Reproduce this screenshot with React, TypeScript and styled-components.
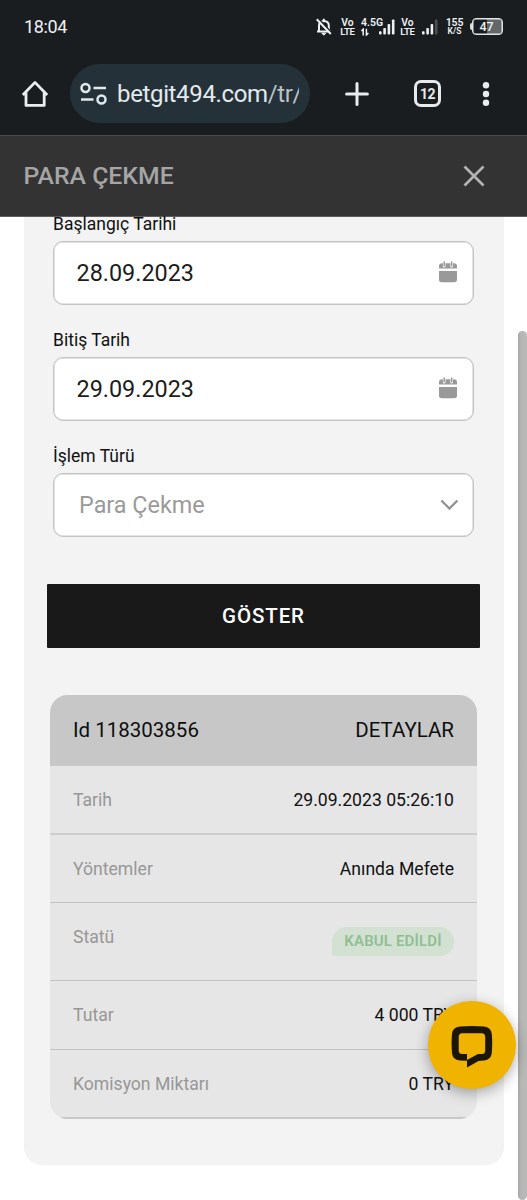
import React from "react";
import styled, { createGlobalStyle } from "styled-components";

const Global = createGlobalStyle`
  * { box-sizing: border-box; }
  html, body { margin: 0; padding: 0; background: #fff; }
  body { font-family: Roboto, "Liberation Sans", sans-serif; color: #111; overflow: hidden; }
`;

const Screen = styled.div`
  position: relative;
  width: 527px;
  height: 1200px;
  overflow: hidden;
  display: flex;
  flex-direction: column;
  background: #fff;
`;

const StatusBar = styled.div`
  height: 53px;
  flex: none;
  display: flex;
  align-items: center;
  padding: 0 24px;
  background: #191d20;
  color: #eef1f2;
`;

const Clock = styled.span`
  font-size: 18px;
  line-height: 20px;
  letter-spacing: -0.35px;
  margin-top: 1px;
  flex: 1;
`;

const StatusIcons = styled.div`
  display: flex;
  align-items: center;
  height: 20px;
`;

const Stack = styled.div<{ $w: number; $ml?: number }>`
  width: ${(p) => p.$w}px;
  margin-left: ${(p) => p.$ml ?? 0}px;
  margin-top: 1px;
  display: flex;
  flex-direction: column;
  align-items: center;
  font-weight: 600;
  white-space: nowrap;
`;

const Tiny = styled.span<{ $size?: number; $ls?: number }>`
  font-size: ${(p) => p.$size ?? 10}px;
  line-height: 9px;
  letter-spacing: ${(p) => p.$ls ?? 0}px;
`;

const Signal = styled.svg<{ $ml: number }>`
  display: block;
  flex: none;
  margin-left: ${(p) => p.$ml}px;
`;

const Battery = styled.div`
  width: 33px;
  height: 17px;
  margin-left: 7px;
  display: flex;
  align-items: center;
`;

const BatteryTip = styled.i`
  width: 2px;
  height: 7px;
  border-radius: 2px 0 0 2px;
  background: #d9dcdd;
`;

const BatteryBody = styled.div`
  width: 31px;
  height: 17px;
  border: 1px solid #e2e5e6;
  box-shadow: inset 0 0 0 0.5px #e2e5e6;
  border-radius: 4px;
  background: linear-gradient(90deg, #191d20 0 50%, #63676a 50%);
  background-clip: padding-box;
  font-size: 12.5px;
  line-height: 16px;
  font-weight: 500;
  text-align: center;
  padding-right: 2px;
`;

const Browser = styled.div`
  height: 82px;
  flex: none;
  display: flex;
  align-items: center;
  padding: 0 0 1px 21px;
  background: #191d20;
`;

const Icon = styled.svg<{ $ml?: number; $mt?: number }>`
  display: block;
  flex: none;
  margin-left: ${(p) => p.$ml ?? 0}px;
  margin-top: ${(p) => p.$mt ?? 0}px;
`;

const Address = styled.div`
  width: 240px;
  height: 59px;
  margin-left: 21px;
  border-radius: 30px;
  background: #243139;
  display: flex;
  align-items: center;
  padding: 0 11px 0 10px;
`;

const Url = styled.div`
  margin-left: 9px;
  flex: 1;
  overflow: hidden;
  white-space: nowrap;
  font-size: 24px;
  letter-spacing: -0.35px;
  line-height: 32px;
  padding-top: 1px;
  color: #e3eaee;
`;

const UrlPath = styled.span`
  color: #b9c2c7;
`;

const Tabs = styled.div`
  width: 27px;
  height: 27px;
  margin-left: 45px;
  border: 3px solid #e6eaec;
  border-radius: 7px;
  font-size: 14px;
  line-height: 22px;
  font-weight: 700;
  letter-spacing: -0.6px;
  text-align: center;
  color: #e6eaec;
`;

const Header = styled.header`
  height: 82px;
  flex: none;
  display: flex;
  align-items: center;
  justify-content: space-between;
  padding: 0 42px 0 23.5px;
  background: #333;
  border-top: 1px solid #4a4a4b;
  border-bottom: 1px solid #5c5c5c;
`;

const Title = styled.h1`
  margin: 0;
  font-size: 24.8px;
  line-height: 28px;
  font-weight: 500;
  color: #a5a5a5;
`;

const Panel = styled.main`
  width: 480px;
  height: 948px;
  margin-left: 23.5px;
  flex: none;
  background: #f3f3f3;
  border-radius: 0 0 18px 18px;
`;

const Form = styled.div`
  padding: 0 29.5px;
`;

const Label = styled.label<{ $top: number }>`
  display: block;
  margin-top: ${(p) => p.$top}px;
  font-size: 17.5px;
  line-height: 20px;
  color: #111;
`;

const Field = styled.div<{ $select?: boolean }>`
  height: 64px;
  margin-top: 7px;
  display: flex;
  align-items: center;
  justify-content: space-between;
  padding: ${(p) => (p.$select ? "1px 14px 0 25px" : "0 16px 0 22.5px")};
  border: 1px solid #c4c4c4;
  box-shadow: inset 0 0 0 0.5px #c8c8c8;
  border-radius: 10px;
  background: #fff;
  font-size: 23.4px;
  color: ${(p) => (p.$select ? "#9a9a9a" : "#1c1c1c")};
`;

const Submit = styled.button`
  display: block;
  width: 433px;
  height: 64.5px;
  margin: 47px 0 0 23.5px;
  padding: 0;
  border: 0;
  border-radius: 1px;
  background: #191919;
  color: #fff;
  font: 500 20.5px/24px Roboto, sans-serif;
  letter-spacing: 0.9px;
`;

const Table = styled.section`
  width: 427px;
  margin: 47px 0 0 26.5px;
  border-radius: 18px;
  overflow: hidden;
  background: #e6e6e6;
`;

const TableHead = styled.div`
  height: 71px;
  display: flex;
  align-items: center;
  justify-content: space-between;
  padding: 0 23px 1px;
  background: #c7c7c7;
  font-size: 20.5px;
  color: #0e0e0e;
`;

const Row = styled.div<{ $h: number; $line: string; $b?: number }>`
  height: ${(p) => p.$h}px;
  display: flex;
  justify-content: space-between;
  align-items: flex-start;
  padding: 24px 23px 0;
  border-bottom: ${(p) => p.$b ?? 1}px solid ${(p) => p.$line};
  font-size: 17.6px;
  line-height: 21px;
`;

const Name = styled.span`
  color: #979797;
`;

const Value = styled.span`
  color: #111;
`;

const Badge = styled.span`
  width: 122px;
  height: 29px;
  border-radius: 15px 15px 15px 2px;
  background: #d3e1d3;
  color: #8fbf91;
  font-size: 15px;
  line-height: 29px;
  font-weight: 600;
  letter-spacing: 0.15px;
  text-align: center;
`;

const Scrollbar = styled.div`
  position: absolute;
  top: 331px;
  right: 0;
  width: 9px;
  height: 869px;
  border-radius: 5px;
  background: linear-gradient(90deg, #a4a4a3, #b5b5b4 30%, #bababa);
`;

const Chat = styled.button`
  position: absolute;
  left: 428px;
  top: 1001px;
  width: 87.5px;
  height: 87.5px;
  padding: 4px 0 0;
  border: 0;
  border-radius: 50%;
  background: #f0b300;
  box-shadow: 0 4px 14px rgba(0, 0, 0, 0.32);
  display: flex;
  align-items: center;
  justify-content: center;
`;

const Bars = ({ dim, ml }: { dim?: boolean; ml: number }) => (
  <Signal $ml={ml} width="16" height="16" viewBox="0 0 16 16" fill="#eef1f2">
    <rect x="0" y="12.2" width="2.6" height="3.3" rx=".8" />
    <rect x="4.3" y="9" width="2.6" height="6.5" rx=".8" />
    <rect x="8.6" y="5" width="2.6" height="10.5" rx=".8" />
    <rect x="12.9" y="0.5" width="2.6" height="15" rx=".8" fill={dim ? "#4c5053" : "#eef1f2"} />
  </Signal>
);

const Calendar = () => (
  <Icon $mt={-3} width="18" height="22" viewBox="0 0 18 22">
    <path d="M0 7.5V5.2Q0 2.2 3 2.2H15Q18 2.2 18 5.2V7.5Z" fill="#999" />
    <path d="M5.2 0V5.2M12.6 0V5.2" stroke="#fff" strokeWidth="2.6" strokeLinecap="round" />
    <path d="M5.2 .9V4.8M12.6 .9V4.8" stroke="#999" strokeWidth="1.5" strokeLinecap="round" />
    <path d="M0 10H18V18.6Q18 21.2 15.4 21.2H2.6Q0 21.2 0 18.6Z" fill="#999" />
  </Icon>
);

const VoLte = ({ ml }: { ml: number }) => (
  <Stack $w={15} $ml={ml}>
    <Tiny $size={10.3}>Vo</Tiny>
    <Tiny $size={9.6} $ls={-0.3}>LTE</Tiny>
  </Stack>
);

export default function App() {
  return (
    <>
      <Global />
      <Screen>
        <StatusBar>
          <Clock>18:04</Clock>
          <StatusIcons>
            <Icon width="16" height="18" viewBox="0 0 16 18" fill="none" stroke="#eef1f2" strokeWidth="2">
              <path d="M3 13V7.5Q3 3.2 7.8 3Q12.8 3.2 12.8 7.5V13M1 13.6H15M7.8 .8V3" />
              <path d="M5.8 15.2H9.8L7.8 17.2Z" fill="#eef1f2" strokeWidth="1" />
              <path d="M2.4 .6L16 15.2" stroke="#191d20" strokeWidth="1.6" />
              <path d="M.8 1.2L14.8 16" />
            </Icon>
            <VoLte ml={8} />
            <Stack $w={22} $ml={6}>
              <Tiny $size={10.5}>4.5G</Tiny>
              <Icon $ml={-14} $mt={1} width="8" height="8" viewBox="0 0 8 8" fill="none" stroke="#eef1f2" strokeWidth="1.5">
                <path d="M2.2 7.5V1.2L.4 3M5.4 .7V7L7.4 5" />
              </Icon>
            </Stack>
            <Bars ml={-4} />
            <VoLte ml={5} />
            <Bars dim ml={7} />
            <Stack $w={17} $ml={8}>
              <Tiny $size={10.5} $ls={-0.2}>155</Tiny>
              <Tiny $size={8.5}>K/S</Tiny>
            </Stack>
            <Battery>
              <BatteryTip />
              <BatteryBody>47</BatteryBody>
            </Battery>
          </StatusIcons>
        </StatusBar>
        <Browser>
          <Icon width="28" height="28" viewBox="0 0 28 28" fill="none" stroke="#e9edef" strokeWidth="2.8" strokeLinejoin="round">
            <path d="M1.8 15L14 2.4L26.2 15M5 12.5V25.4H23.2V12.5" />
          </Icon>
          <Address>
            <Icon width="28" height="24" viewBox="0 0 28 24" fill="none" stroke="#e0e8ec" strokeWidth="2.5">
              <circle cx="5.5" cy="6" r="4" />
              <path d="M13.5 6H26M1 17.5H13.5" />
              <circle cx="21.5" cy="17.5" r="4" />
            </Icon>
            <Url>betgit494.com<UrlPath>/tr/</UrlPath></Url>
          </Address>
          <Icon $ml={35} width="24" height="24" viewBox="0 0 24 24" stroke="#e9edef" strokeWidth="3" strokeLinecap="round">
            <path d="M12 1.6V22.4M1.6 12H22.4" />
          </Icon>
          <Tabs>12</Tabs>
          <Icon $ml={41} width="8" height="24" viewBox="0 0 8 24" fill="#e9edef">
            <circle cx="4" cy="3.3" r="3.2" />
            <circle cx="4" cy="12" r="3.2" />
            <circle cx="4" cy="20.7" r="3.2" />
          </Icon>
        </Browser>
        <Header>
          <Title>PARA ÇEKME</Title>
          <Icon width="22" height="22" viewBox="0 0 22 22" stroke="#b4b4b4" strokeWidth="2.6">
            <path d="M1.5 1.5L20.5 20.5M20.5 1.5L1.5 20.5" />
          </Icon>
        </Header>
        <Panel>
          <Form>
            <Label $top={-3}>Başlangıç Tarihi</Label>
            <Field>28.09.2023<Calendar /></Field>
            <Label $top={25}>Bitiş Tarih</Label>
            <Field>29.09.2023<Calendar /></Field>
            <Label $top={24.5}>İşlem Türü</Label>
            <Field $select>
              Para Çekme
              <Icon width="20" height="12" viewBox="0 0 20 12" fill="none" stroke="#939393" strokeWidth="2.4">
                <path d="M2.4 1.5L10.4 9.5L18.4 1.5" />
              </Icon>
            </Field>
          </Form>
          <Submit>GÖSTER</Submit>
          <Table>
            <TableHead><span>Id 118303856</span><span>DETAYLAR</span></TableHead>
            <Row $h={69} $b={2} $line="#cdcdcd"><Name>Tarih</Name><Value>29.09.2023 05:26:10</Value></Row>
            <Row $h={68} $line="#c2c2c2"><Name>Yöntemler</Name><Value>Anında Mefete</Value></Row>
            <Row $h={78} $line="#c2c2c2"><Name>Statü</Name><Badge>KABUL EDİLDİ</Badge></Row>
            <Row $h={69} $line="#c2c2c2"><Name>Tutar</Name><Value>4 000 TRY</Value></Row>
            <Row $h={69} $b={2} $line="#c8c8c8"><Name>Komisyon Miktarı</Name><Value>0 TRY</Value></Row>
          </Table>
        </Panel>
        <Scrollbar />
        <Chat aria-label="Chat">
          <svg width="42" height="42" viewBox="0 0 42 42">
            <path fillRule="evenodd" fill="#1b1608" d="M9 0.5Q21 -.5 33 0.5Q40 1 40.8 8Q41.6 17 40.8 27Q40 34 33 34.5L27.5 35L16 41.5V34.8L9 34.5Q1.5 34 1 27Q0.2 17 1 8Q1.5 1 9 .5ZM11 7.3Q8 7.5 7.7 10.5V25Q8 27.8 11 28H16V34L27 28H31Q34 27.8 34.2 25V10.5Q34 7.5 31 7.3Z" />
          </svg>
        </Chat>
      </Screen>
    </>
  );
}
